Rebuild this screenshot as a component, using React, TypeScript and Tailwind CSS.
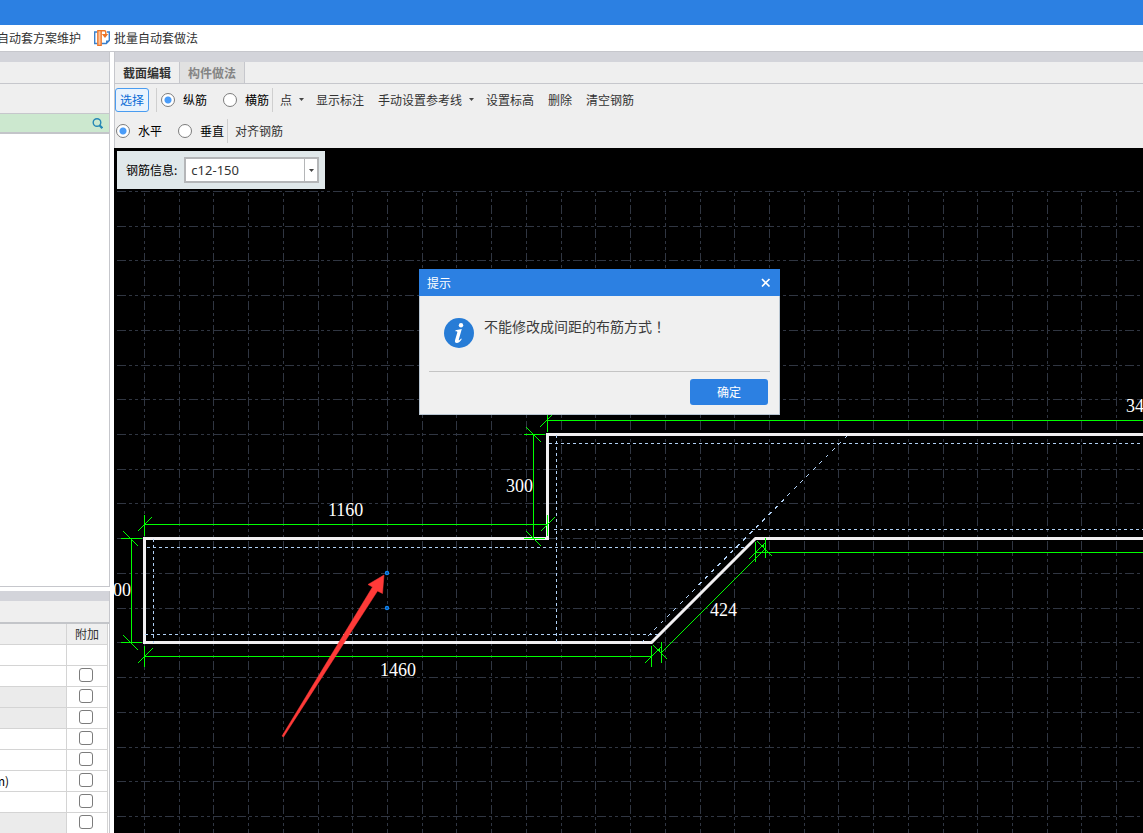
import type { ReactNode } from "react";

const FONT = "font-['Noto_Sans_CJK_SC',sans-serif]";
const STEP = 34.72;
const columns = Array.from({ length: 60 }, (_, i) => Math.round(144 + STEP * i));
const gridRows = Array.from({ length: 40 }, (_, i) => Math.round(191 + STEP * i));

type Row = { shaded?: boolean; box?: boolean; text?: string };
const rows: Row[] = [
  {},
  { box: true },
  { box: true, shaded: true },
  { box: true, shaded: true },
  { box: true },
  { box: true },
  { box: true, text: "m)" },
  { box: true },
  { box: true, shaded: true },
];

function Caret() {
  return (
    <svg width="5" height="3" viewBox="0 0 5 3" className="shrink-0" aria-hidden="true">
      <path d="M0 0h5L2.5 3z" fill="#444" />
    </svg>
  );
}

function Divider() {
  return <span className="h-6 w-px shrink-0 bg-[#cfcfcf]" />;
}

function Radio({ name, label, checked }: { name: string; label: string; checked?: boolean }) {
  return (
    <label className="flex items-center gap-2 whitespace-nowrap text-black">
      <input
        type="radio"
        name={name}
        defaultChecked={checked}
        className="size-3.5 shrink-0 appearance-none rounded-full border border-[#7c7c7c] bg-white checked:bg-[radial-gradient(circle,#4a9cf8_3px,#fff_4px)]"
      />
      {label}
    </label>
  );
}

function Tool({ children }: { children: ReactNode }) {
  return (
    <button type="button" className="flex shrink-0 items-center gap-[7px] whitespace-nowrap">
      {children}
    </button>
  );
}

function BatchIcon() {
  return (
    <svg width="16" height="16" viewBox="0 0 16 16" fill="none" aria-hidden="true">
      <path d="M3.500 2H.7v11.500h2.800M13 2h2.300v8.500l-3 3H7.500" stroke="#3a80cc" strokeWidth="1.400" />
      <path d="M15.500 10.500L12 14v-3.500z" fill="#3a80cc" />
      <path d="M3.800 .7h3.400v14.600H3.800z" fill="#fbc39c" stroke="#ee7426" strokeWidth="1.300" />
      <path d="M7 .7h3.500q1.300 0 1.300 1.300v2.500" stroke="#ee7426" strokeWidth="1.400" />
      <path d="M7.800 4h6.400L11 8z" fill="#ee7426" />
    </svg>
  );
}

function Drawing() {
  return (
    <svg className="absolute inset-0 size-full" aria-hidden="true">
      <g transform="translate(-113.5 -147.5)" fill="none" shapeRendering="crispEdges">
        <g stroke="#303642" strokeDasharray="9 3 3 3 3 3">
          {gridRows.map((y) => (
            <path key={y} d={`M116.5 ${y}H2400`} />
          ))}
          {columns.map((x) => (
            <path key={x} d={`M${x} 190.5V1600`} strokeDashoffset="10" />
          ))}
        </g>
        <path
          d="M2400 434H547V538H144V642H651L755 538H2400"
          stroke="#f2f0f2"
          strokeWidth="3"
          shapeRendering="auto"
        />
        <g stroke="#b0d0f4" strokeDasharray="3 3">
          <path d="M146 547H746M144 634H657M153 538V642M556 434V642M548 443H2400M553 529H2400" />
          <path d="M641 642L847 435" strokeDasharray="4 5" />
        </g>
        <g stroke="#00ff00">
          <path d="M137 531L151 517M540 531L554 517M123 531L138 546M123 635L138 650" />
          <path d="M137 663L152 648M644 663L660 647M661 652L765 548M653 645L667 659" />
          <path d="M757 541L772 556M748 559L764 543M539 427L554 412M526 427L541 442M526 531L541 546" />
        </g>
      </g>
      <g transform="translate(-113.7 -147.7)" fill="none" shapeRendering="crispEdges">
        <g stroke="#00ff00">
          <path d="M144 524H547M144 515V536M547 515V536" />
          <path d="M131 538V642M121 538H142M121 642H142" />
          <path d="M144 656H651M144 646V667M651 646V667" />
          <path d="M661 642V663M765 538V558M755 552H2400M755 542V562" />
          <path d="M547 420H2400M547 411V432" />
          <path d="M533 434V538M524 434H545M524 538H545" />
        </g>
        <g fill="#00ff00">
          <circle cx="659" cy="650" r="1.200" />
          <circle cx="763" cy="546" r="1.200" />
        </g>
      </g>
      <g transform="translate(-114 -148)" shapeRendering="auto">
        <g fill="#06284c" stroke="#0f86f5" strokeWidth="1.400">
          <circle cx="387" cy="573" r="1.500" />
          <circle cx="387" cy="608" r="1.500" />
        </g>
        <path
          d="M384 575L368 584.500L372.500 587L282 736L283.500 737L377.500 591L382.500 593.500Z"
          fill="#ff3a38"
          stroke="#ff3a38"
          strokeWidth=".500"
        />
      </g>
      <g
        transform="translate(-114 -148)"
        fill="#fff"
        className="font-['Liberation_Serif',serif] text-[18px]"
      >
        <text x="328" y="516">1160</text>
        <text x="506" y="492">300</text>
        <text x="113" y="596">00</text>
        <text x="710" y="616">424</text>
        <text x="380" y="676">1460</text>
        <text x="1126" y="412">34</text>
      </g>
    </svg>
  );
}

function Notice() {
  return (
    <section
      role="dialog"
      aria-labelledby="notice-title"
      className="absolute top-[121px] left-[305px] flex w-[361px] flex-col border border-t-0 border-[#b9c6d2] bg-[#f0f0f0]"
    >
      <header className="-mx-px flex h-[27px] items-center justify-between bg-[#2c80e2] px-2 text-white">
        <h2 id="notice-title">提示</h2>
        <button type="button" aria-label="关闭" className="flex size-3 items-center justify-center">
          <svg width="10" height="10" viewBox="0 0 10 10" aria-hidden="true">
            <path d="M1 1l7.500 7.500M8.500 1l-7.500 7.500" stroke="#fff" strokeWidth="1.700" />
          </svg>
        </button>
      </header>
      <div className="flex h-[75px] gap-2.5 pt-[22px] pl-6">
        <svg width="30" height="30" viewBox="0 0 30 30" className="shrink-0" aria-hidden="true">
          <circle cx="15" cy="15" r="15" fill="#277cd6" />
          <circle cx="17" cy="7.200" r="2.200" fill="#fff" />
          <path
            d="M11.500 12.300l6.300-1.200-3 10.300c-.3 1 .2 1.200.8.700l1.500-1.600.7.600c-1.500 2.500-3.300 3.900-5 3.900-1.600 0-2.200-1.200-1.700-3l2.200-7.600c.2-.9-.2-1.200-1.900-1.200z"
            fill="#fff"
          />
        </svg>
        <p className="text-sm leading-4 text-[#3c3c3c]">
          不能修改成间距的布筋方式<span className="font-['Noto_Sans_CJK_TC',sans-serif]">！</span>
        </p>
      </div>
      <footer className="mx-[9px] flex justify-end border-t border-[#c4c4c4] pt-[7px] pr-0.5 pb-[9px]">
        <button type="button" className="h-[26px] w-[78px] rounded-[3px] bg-[#2c80e2] text-white">
          确定
        </button>
      </footer>
    </section>
  );
}

function Sidebar() {
  return (
    <aside className="flex w-[110px] shrink-0 flex-col gap-1">
      <div className="flex min-h-0 flex-1 flex-col border-r border-b border-[#c6c7cc] bg-white">
        <div className="h-2.5 shrink-0 bg-[#d3d4da]" />
        <div className="h-[22px] shrink-0 border-b border-[#c6c7cc] bg-[#efefef]" />
        <div className="h-[30px] shrink-0 border-b border-[#c6c7cc] bg-[#efefef]" />
        <div className="flex h-5 shrink-0 items-center justify-end border-b-2 border-[#c3c5c9] bg-[#cce8cf] pr-1.5">
          <button type="button" aria-label="搜索">
            <svg width="11" height="11" viewBox="0 0 11 11" fill="none" stroke="#2587b5" aria-hidden="true">
              <circle cx="5" cy="4.500" r="3.800" strokeWidth="1.400" />
              <path d="M7.500 7.300l2.800 2.800" strokeWidth="2.200" />
            </svg>
          </button>
        </div>
      </div>
      <div className="h-[242px] shrink-0 overflow-hidden border-r border-[#c6c7cc] bg-white">
        <div className="h-2.5 bg-[#d3d4da]" />
        <div className="h-[23px] border-b-2 border-[#c3c5c9] bg-[#efefef]" />
        <table className="w-[108px] table-fixed border-separate border-spacing-0">
          <thead>
            <tr className="h-[21px] bg-[#efefef]">
              <th aria-label="属性" className="w-[67px] border-r border-b border-[#d4d4d4] p-0" />
              <th className="border-r border-b border-[#d4d4d4] p-0 leading-5 font-normal text-[#333]">
                附加
              </th>
            </tr>
          </thead>
          <tbody>
            {rows.map((row, i) => (
              <tr key={i} className="h-[21px]">
                <td
                  className={`border-r border-b border-[#d4d4d4] p-0 leading-5 ${row.shaded ? "bg-[#ebebeb]" : "bg-white"}`}
                >
                  {row.text && <span className="-ml-1.5 text-black">{row.text}</span>}
                </td>
                <td className="border-r border-b border-[#d4d4d4] p-0 pb-0.5">
                  {row.box && (
                    <input
                      type="checkbox"
                      aria-label="附加"
                      className="mr-auto ml-3 block size-3.5 appearance-none rounded-[3px] border border-[#7c7c7c] bg-white"
                    />
                  )}
                </td>
              </tr>
            ))}
          </tbody>
        </table>
      </div>
    </aside>
  );
}

export default function App() {
  return (
    <div className={`flex h-screen flex-col overflow-hidden bg-white text-xs leading-4 text-[#333] ${FONT}`}>
      <div className="h-[25px] shrink-0 bg-[#2c80e2]" />
      <nav className="flex h-[27px] shrink-0 items-center gap-[13px] border-b border-[#c6c7cc]">
        <button type="button" className="-ml-[3px] whitespace-nowrap">
          自动套方案维护
        </button>
        <button type="button" className="flex items-center gap-1 whitespace-nowrap">
          <BatchIcon />
          批量自动套做法
        </button>
      </nav>
      <div className="flex min-h-0 flex-1 gap-1">
        <Sidebar />
        <main className="flex min-w-0 flex-1 flex-col">
          <div className="border-l border-[#c6c7cc] bg-[#efefef] pb-px">
            <div className="h-2.5 bg-[#d3d4da]" />
            <div role="tablist" className="flex h-[22px] border-b border-[#c6c7cc] font-bold">
              <button type="button" role="tab" aria-selected="true" className="w-16">
                截面编辑
              </button>
              <button
                type="button"
                role="tab"
                aria-selected="false"
                className="w-[66px] border-x border-[#c6c7cc] bg-[#e1e1e1] text-[#858585]"
              >
                构件做法
              </button>
            </div>
            <div className="flex h-[31px] items-center">
              <button
                type="button"
                className="h-6 w-[34px] shrink-0 rounded-[3px] border border-[#4a9cf0] bg-[#e9f3fd] text-[#0a6cd6]"
              >
                选择
              </button>
              <div className="flex items-center gap-1 pl-[7px]">
                <Divider />
                <Radio name="bar" label="纵筋" checked />
              </div>
              <div className="flex items-center gap-[3px] pl-4">
                <Radio name="bar" label="横筋" />
                <Divider />
              </div>
              <div className="flex items-center pl-[7px]">
                <div className="flex items-center gap-3">
                  <Tool>
                    点 <Caret />
                  </Tool>
                  <Tool>显示标注</Tool>
                </div>
                <div className="flex items-center gap-3 pl-3.5">
                  <Tool>
                    手动设置参考线 <Caret />
                  </Tool>
                  <Tool>设置标高</Tool>
                </div>
                <div className="flex items-center gap-3.5 pl-3.5">
                  <Tool>删除</Tool>
                  <Tool>清空钢筋</Tool>
                </div>
              </div>
            </div>
            <div className="flex h-8 items-center">
              <div className="flex items-center gap-4 pl-px">
                <Radio name="direction" label="水平" checked />
                <div className="flex items-center gap-[3px]">
                  <Radio name="direction" label="垂直" />
                  <Divider />
                </div>
              </div>
              <div className="flex pl-[7px]">
                <Tool>对齐钢筋</Tool>
              </div>
            </div>
          </div>
          <div className="relative min-h-0 flex-1 overflow-hidden bg-black">
            <Drawing />
            <div className="absolute top-[3px] left-[3px] flex h-[38px] items-center gap-[7px] bg-[#e0e8ea] pr-1.5 pl-[9px] text-black">
              <label htmlFor="bar-info" className="whitespace-nowrap">
                钢筋信息:
              </label>
              <div className="relative flex">
                <select
                  id="bar-info"
                  className="h-[26px] w-[135px] appearance-none border-2 border-[#b4b6b8] bg-white pl-[5px] font-['Noto_Sans',sans-serif] text-[13px] text-[#333]"
                >
                  <option>c12-150</option>
                </select>
                <span className="pointer-events-none absolute inset-y-px right-px flex w-3.5 items-center justify-center border-l border-[#b4b6b8]">
                  <Caret />
                </span>
              </div>
            </div>
            <Notice />
          </div>
        </main>
      </div>
    </div>
  );
}
